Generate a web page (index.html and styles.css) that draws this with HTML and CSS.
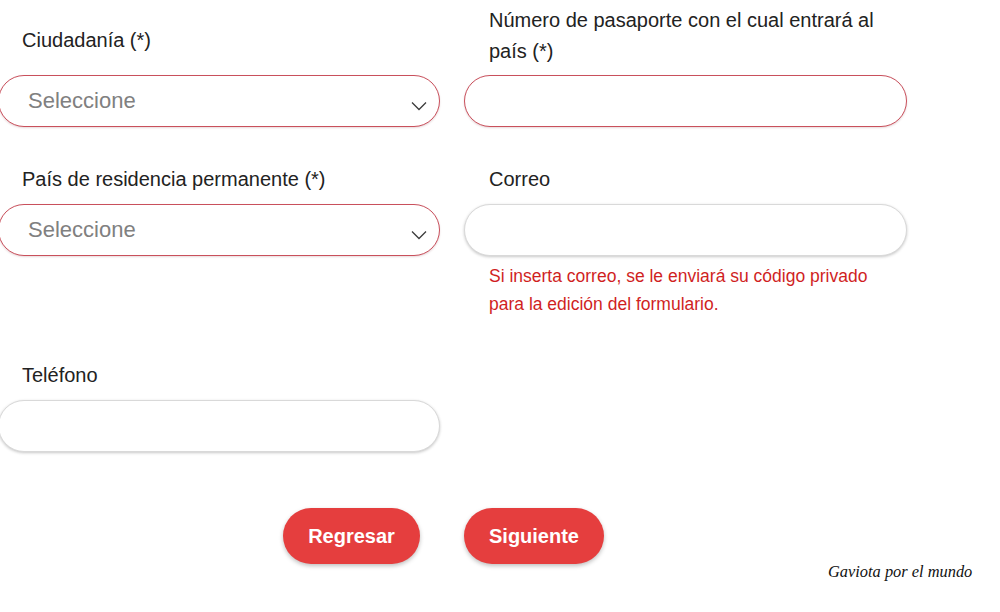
FILE: index.html
```html
<!DOCTYPE html>
<html lang="es">
<head>
<meta charset="utf-8">
<title>Formulario</title>
<link rel="stylesheet" href="styles.css">
</head>
<body>
<form class="form">
  <div class="row row-first">
    <div class="field">
      <label class="label label-low">Ciudadanía (*)</label>
      <div class="control control-error select">
        <span class="placeholder">Seleccione</span>
        <svg class="chevron" viewBox="0 0 16 10" aria-hidden="true"><path d="M1 1.5 8 8.5 15 1.5"/></svg>
      </div>
    </div>
    <div class="field field-right">
      <label class="label">Número de pasaporte con el cual entrará al país (*)</label>
      <div class="control control-error"></div>
    </div>
  </div>
  <div class="row row-second">
    <div class="field">
      <label class="label">País de residencia permanente (*)</label>
      <div class="control control-error select">
        <span class="placeholder">Seleccione</span>
        <svg class="chevron" viewBox="0 0 16 10" aria-hidden="true"><path d="M1 1.5 8 8.5 15 1.5"/></svg>
      </div>
    </div>
    <div class="field field-right">
      <label class="label">Correo</label>
      <div class="control"></div>
      <p class="help">Si inserta correo, se le enviará su código privado para la edición del formulario.</p>
    </div>
  </div>
  <div class="row row-third">
    <div class="field">
      <label class="label">Teléfono</label>
      <div class="control"></div>
    </div>
  </div>
  <div class="row actions">
    <div class="action-left"><button type="button" class="btn btn-back">Regresar</button></div>
    <div><button type="button" class="btn btn-next">Siguiente</button></div>
  </div>
</form>
<div class="watermark">Gaviota por el mundo</div>
</body>
</html>
```
FILE: styles.css
```css
* { box-sizing: border-box; }
html, body { margin: 0; padding: 0; height: 100%; background: #fff; overflow: hidden; }
body { position: relative; font-family: "Liberation Sans", Arial, sans-serif; color: #222; }
.form { margin-left: -2px; width: 909px; }
.row { display: grid; grid-template-columns: 442px 443px; column-gap: 24px; align-items: start; }
.row-first { padding-top: 5px; align-items: end; }
.row-second { margin-top: 37px; }
.row-third { margin-top: 42px; }
.label { display: block; font-size: 20px; line-height: 31px; padding: 0 24px; margin-bottom: 9px; color: #222; }
.label-low { margin-bottom: 19px; }
.field-right .label { padding: 0 25px; }
.row-first .field-right .label { margin-bottom: 8px; }
.control { height: 52px; border: 1px solid #d9d9d9; border-radius: 26px; background: #fff; box-shadow: 0 1px 3px rgba(0,0,0,.22); }
.control-error { border-color: #c9505c; box-shadow: 0 1px 2px rgba(120,40,50,.18); }
.select { display: flex; align-items: center; justify-content: space-between; padding: 0 12px 0 29px; }
.placeholder { font-size: 22px; color: #808080; }
.chevron { width: 16px; height: 10px; margin-top: 10px; fill: none; stroke: #3c3c3c; stroke-width: 1.3; }
.help { margin: 6px 0 0; padding: 0 25px; font-size: 17.5px; line-height: 28px; color: #d01f1f; }
.actions { margin-top: 56px; }
.action-left { display: flex; justify-content: flex-end; padding-right: 20px; }
.btn { height: 56px; border: 0; border-radius: 28px; background: #e53e3e; color: #fff; font-family: inherit; font-size: 20px; font-weight: 700; box-shadow: 0 2px 4px rgba(0,0,0,.25); padding: 0; }
.btn-back { width: 137px; }
.btn-next { width: 140px; }
.watermark { position: absolute; left: 828px; top: 562px; font-family: "Liberation Serif", serif; font-style: italic; font-size: 16.4px; line-height: 20px; color: #111; white-space: nowrap; }
```
